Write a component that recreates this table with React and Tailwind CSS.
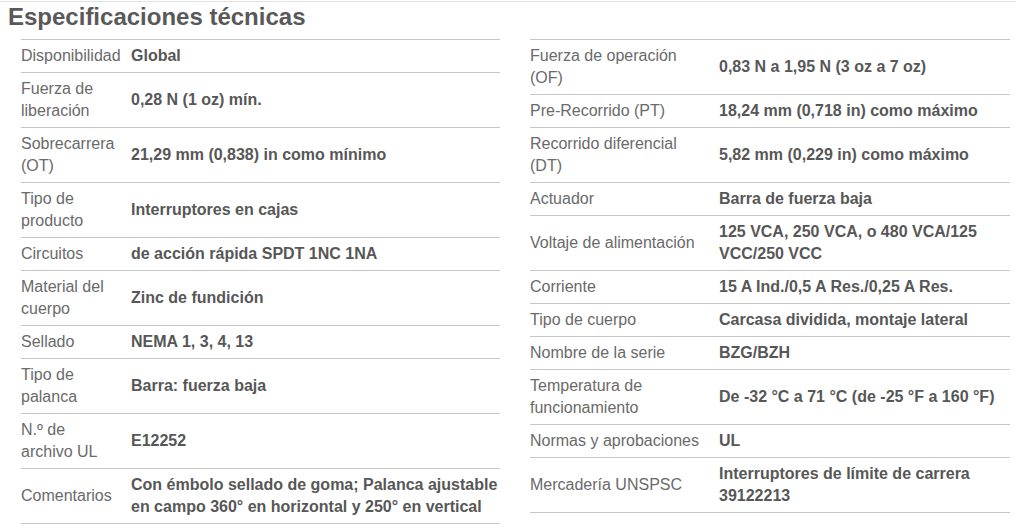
import React from "react";

const left = [
  [["Disponibilidad"], ["Global"]],
  [["Fuerza de", "liberación"], ["0,28 N (1 oz) mín."]],
  [["Sobrecarrera", "(OT)"], ["21,29 mm (0,838) in como mínimo"]],
  [["Tipo de", "producto"], ["Interruptores en cajas"]],
  [["Circuitos"], ["de acción rápida SPDT 1NC 1NA"]],
  [["Material del", "cuerpo"], ["Zinc de fundición"]],
  [["Sellado"], ["NEMA 1, 3, 4, 13"]],
  [["Tipo de", "palanca"], ["Barra: fuerza baja"]],
  [["N.º de", "archivo UL"], ["E12252"]],
  [["Comentarios"], ["Con émbolo sellado de goma; Palanca ajustable", "en campo 360° en horizontal y 250° en vertical"]],
];

const right = [
  [["Fuerza de operación", "(OF)"], ["0,83 N a 1,95 N (3 oz a 7 oz)"]],
  [["Pre-Recorrido (PT)"], ["18,24 mm (0,718 in) como máximo"]],
  [["Recorrido diferencial", "(DT)"], ["5,82 mm (0,229 in) como máximo"]],
  [["Actuador"], ["Barra de fuerza baja"]],
  [["Voltaje de alimentación"], ["125 VCA, 250 VCA, o 480 VCA/125", "VCC/250 VCC"]],
  [["Corriente"], ["15 A Ind./0,5 A Res./0,25 A Res."]],
  [["Tipo de cuerpo"], ["Carcasa dividida, montaje lateral"]],
  [["Nombre de la serie"], ["BZG/BZH"]],
  [["Temperatura de", "funcionamiento"], ["De -32 °C a 71 °C (de -25 °F a 160 °F)"]],
  [["Normas y aprobaciones"], ["UL"]],
  [["Mercadería UNSPSC"], ["Interruptores de límite de carrera", "39122213"]],
];

function Lines({ lines }) {
  return lines.map((l, i) => (
    <div key={i} className="whitespace-nowrap">
      {l}
    </div>
  ));
}

function Table({ rows, labelW, width }) {
  return (
    <div className={`${width} border-t border-[#c6c6c6]`}>
      {rows.map(([label, value], i) => (
        <div
          key={i}
          className={`grid ${labelW} items-center border-b border-[#c6c6c6] py-[5px] text-[16px] leading-[22px]`}
        >
          <div className="text-[#6a6a6a]">
            <Lines lines={label} />
          </div>
          <div className="font-bold text-[#575757]">
            <Lines lines={value} />
          </div>
        </div>
      ))}
    </div>
  );
}

export default function App() {
  return (
    <div
      className="w-[1016px] h-[527px] bg-white overflow-hidden"
      style={{ fontFamily: '"Liberation Sans", Arial, sans-serif' }}
    >
      <div className="mt-[1px] h-px bg-[#e2e2e2]" />
      <h1 className="mt-px ml-[8px] text-[24px] leading-[28px] font-bold text-[#595959]">
        Especificaciones técnicas
      </h1>
      <div className="mt-[8px] flex gap-[30px] pl-[21px] items-start">
        <Table rows={left} labelW="grid-cols-[110px_1fr]" width="w-[479px]" />
        <Table rows={right} labelW="grid-cols-[189px_1fr]" width="w-[480px]" />
      </div>
    </div>
  );
}
